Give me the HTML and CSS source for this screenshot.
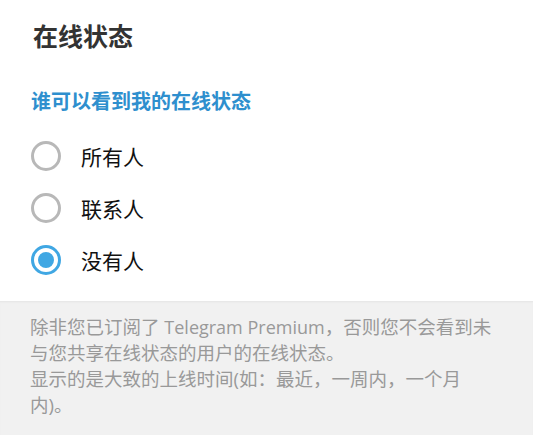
FILE: index.html
```html
<!DOCTYPE html>
<html lang="zh-CN">
<head>
    <meta charset="UTF-8">
    <title>在线状态</title>
    <link rel="stylesheet" href="styles.css">
</head>
<body class="page">
<div class="box">
    <h1 class="box-title">在线状态</h1>
    <div class="section">
        <h2 class="section-title">谁可以看到我的在线状态</h2>
        <ul class="options">
            <li class="option"><span class="radio"></span><span class="option-text">所有人</span></li>
            <li class="option"><span class="radio"></span><span class="option-text">联系人</span></li>
            <li class="option"><span class="radio radio-on"></span><span class="option-text">没有人</span></li>
        </ul>
    </div>
    <div class="about">
        <p class="about-text">除非您已订阅了 <span class="latin">Telegram Premium</span>，否则您不会看到未与您共享在线状态的用户的在线状态。</p>
        <p class="about-text">显示的是大致的上线时间(如：最近，一周内，一个月内)。</p>
    </div>
</div>
</body>
</html>
```

FILE: styles.css
```css
.page {margin: 0; padding: 0; background: #fff;
    font-family: "Open Sans", "Noto Sans CJK SC", sans-serif;}
.box {display: flex; flex-direction: column; height: 435px;}
.box-title {margin: 0; padding: 21px 33px 0; height: 43px; line-height: 30px;
    font-size: 25px; font-weight: 700; color: #333;}
.section {padding: 0 31px;}
.section-title {margin: 0; padding-top: 23px; line-height: 30px;
    font-size: 20px; font-weight: 700; color: #2e8fce;}
.options {list-style: none; margin: 0; padding: 13px 0 15px;}
.option {display: flex; align-items: center; height: 52px;}
.radio {box-sizing: border-box; width: 30px; height: 30px; border: 3px solid #b8b8b8;
    border-radius: 50%; display: flex; align-items: center; justify-content: center;}
.radio-on {border-color: #40a7e3;}
.radio-on::after {content: ""; width: 16px; height: 16px; border-radius: 50%; background: #40a7e3;}
.option-text {margin-left: 20px; font-size: 21px; color: #111;}
.about {flex: 1; background: #f1f1f1; padding: 13px 31px 13px 30px; box-shadow: inset 0 2px 2px -1px #e4e4e4;}
.about-text {margin: 0; font-size: 18.5px; line-height: 26px; color: #999;}
.latin {font-size: 18px;}
```
